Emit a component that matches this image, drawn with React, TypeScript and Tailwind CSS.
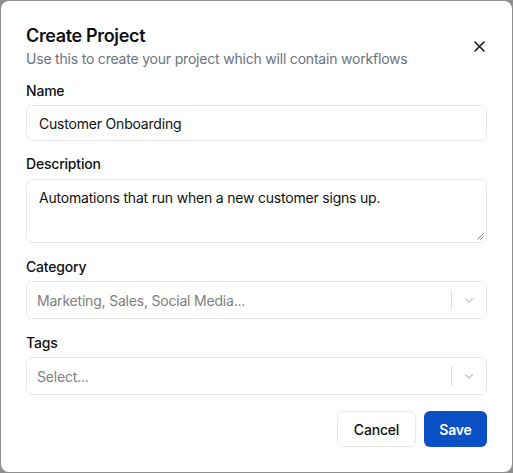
import React from "react";

function Chevron() {
  return (
    <svg width="14" height="14" viewBox="0 0 20 20" fill="#cccccc" aria-hidden>
      <path d="M4.516 7.548c0.436-0.446 1.043-0.481 1.576 0l3.908 3.747 3.908-3.747c0.533-0.481 1.141-0.446 1.574 0 0.436 0.445 0.408 1.197 0 1.615-0.406 0.418-4.695 4.502-4.695 4.502-0.217 0.223-0.502 0.335-0.787 0.335s-0.57-0.112-0.789-0.335c0 0-4.287-4.084-4.695-4.502s-0.436-1.17 0-1.615z" />
    </svg>
  );
}

function SelectBox({ placeholder }: { placeholder: string }) {
  return (
    <div className="mt-[4px] flex h-[38px] items-center rounded-[6px] border border-[#e6e8ec] bg-white">
      <div className="flex-1 pl-[10px] text-[14px] text-[#808080]">{placeholder}</div>
      <div className="h-[20px] w-px bg-[#e0e0e0]" />
      <div className="flex w-[34px] items-center justify-center">
        <Chevron />
      </div>
    </div>
  );
}

export default function App() {
  return (
    <div
      className="h-[473px] w-[513px] bg-[#8f8f8f] p-px tracking-[-0.2px]"
      style={{ fontFamily: "Inter, 'Noto Sans', sans-serif" }}
    >
      <div className="relative h-full w-full rounded-[8px] bg-white px-[25px] pt-[22px]">
        <button className="absolute right-[27px] top-[39px] flex h-[12px] w-[12px] items-center justify-center text-[#111827]">
          <svg width="11" height="11" viewBox="0 0 11 11" fill="none" stroke="#111827" strokeWidth="1.6" strokeLinecap="round">
            <path d="M1 1 L10 10 M10 1 L1 10" />
          </svg>
        </button>
        <h2 className="text-[18px] font-semibold leading-[26px] tracking-[-0.35px] text-[#0f1115]">Create Project</h2>
        <p className="text-[14px] leading-[20px] text-[#6b7280]">
          Use this to create your project which will contain workflows
        </p>

        <div className="mt-[12px] text-[14px] font-medium leading-[20px] text-[#0f1115]">Name</div>
        <div className="mt-[4px] flex h-[36px] items-center rounded-[6px] border border-[#e6e8ec] px-[12px] text-[14px] text-[#111111]">
          Customer Onboarding
        </div>

        <div className="mt-[13px] text-[14px] font-medium leading-[20px] text-[#0f1115]">Description</div>
        <div className="relative mt-[5px] h-[64px] rounded-[6px] border border-[#e6e8ec] px-[12px] pt-[8px] text-[14px] leading-[20px] text-[#111111]">
          Automations that run when a new customer signs up.
          <svg className="absolute bottom-[2px] right-[2px]" width="7" height="7" viewBox="0 0 7 7" stroke="#777" strokeWidth="0.9">
            <path d="M6.5 0.5 L0.5 6.5 M6.5 3.5 L3.5 6.5" />
          </svg>
        </div>

        <div className="mt-[14px] text-[14px] font-medium leading-[20px] text-[#0f1115]">Category</div>
        <SelectBox placeholder="Marketing, Sales, Social Media..." />

        <div className="mt-[14px] text-[14px] font-medium leading-[20px] text-[#0f1115]">Tags</div>
        <SelectBox placeholder="Select..." />

        <div className="mt-[16px] flex justify-end gap-[8px]">
          <button className="h-[36px] w-[79px] rounded-[6px] border border-[#e6e8ec] bg-white text-[14px] font-medium text-[#111111]">
            Cancel
          </button>
          <button className="h-[36px] w-[63px] rounded-[6px] bg-[#0b51c5] text-[14px] font-semibold text-white">
            Save
          </button>
        </div>
      </div>
    </div>
  );
}
